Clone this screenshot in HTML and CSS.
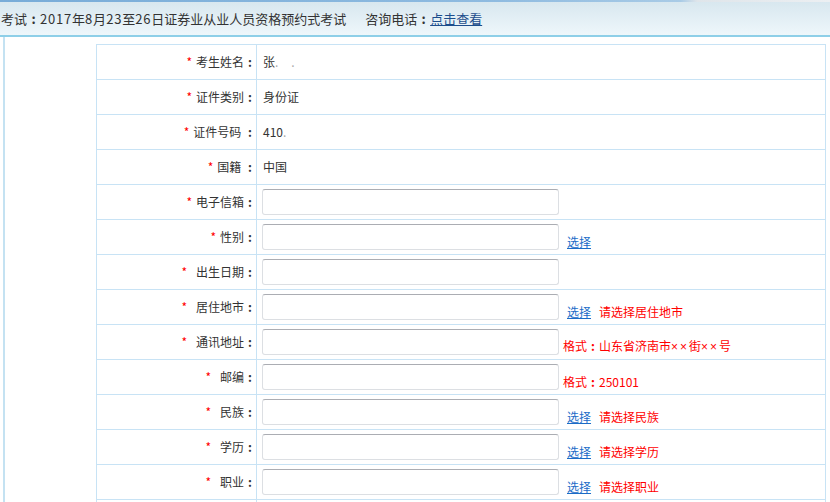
FILE: index.html
```html
<!DOCTYPE html>
<html lang="zh-CN">
<head>
<meta charset="utf-8">
<title>考生信息</title>
<link rel="stylesheet" href="styles.css">
</head>
<body>
<div class="topline"></div>
<div class="header">
  <span class="exam">考试<span class="c">:</span><span class="num">2017</span>年<span class="num">8</span>月<span class="num">23</span>至<span class="num">26</span>日证券业从业人员资格预约式考试</span>
  <span class="phone">咨询电话<span class="c">:</span><a href="#" class="hlink">点击查看</a></span>
</div>
<div class="main">
  <table class="form">
    <tr>
      <td class="label"><span class="req">*</span>考生姓名<span class="c">:</span></td>
      <td class="value"><span class="txt">张<span class="dim">.</span><span class="dim far">.</span></span></td>
    </tr>
    <tr>
      <td class="label"><span class="req">*</span>证件类别<span class="c">:</span></td>
      <td class="value"><span class="txt">身份证</span></td>
    </tr>
    <tr>
      <td class="label"><span class="req">*</span>证件号码 <span class="c">:</span></td>
      <td class="value"><span class="txt">410<span class="dim">.</span></span></td>
    </tr>
    <tr>
      <td class="label"><span class="req">*</span>国籍 <span class="c">:</span></td>
      <td class="value"><span class="txt">中国</span></td>
    </tr>
    <tr>
      <td class="label"><span class="req">*</span>电子信箱<span class="c">:</span></td>
      <td class="value"><div class="field"><input type="text" class="inp"></div></td>
    </tr>
    <tr>
      <td class="label"><span class="req">*</span>性别<span class="c">:</span></td>
      <td class="value"><div class="field"><input type="text" class="inp"><a href="#" class="pick">选择</a></div></td>
    </tr>
    <tr>
      <td class="label"><span class="req wide">*</span>出生日期<span class="c">:</span></td>
      <td class="value"><div class="field"><input type="text" class="inp"></div></td>
    </tr>
    <tr>
      <td class="label"><span class="req wide">*</span>居住地市<span class="c">:</span></td>
      <td class="value"><div class="field"><input type="text" class="inp"><a href="#" class="pick">选择</a><span class="tip">请选择居住地市</span></div></td>
    </tr>
    <tr>
      <td class="label"><span class="req wide">*</span>通讯地址<span class="c">:</span></td>
      <td class="value"><div class="field"><input type="text" class="inp"><span class="fmt">格式<span class="c">:</span>山东省济南市<span class="x">××</span>街<span class="x">××</span>号</span></div></td>
    </tr>
    <tr>
      <td class="label"><span class="req wide">*</span>邮编<span class="c">:</span></td>
      <td class="value"><div class="field"><input type="text" class="inp"><span class="fmt">格式<span class="c">:</span>250101</span></div></td>
    </tr>
    <tr>
      <td class="label"><span class="req wide">*</span>民族<span class="c">:</span></td>
      <td class="value"><div class="field"><input type="text" class="inp"><a href="#" class="pick">选择</a><span class="tip">请选择民族</span></div></td>
    </tr>
    <tr>
      <td class="label"><span class="req wide">*</span>学历<span class="c">:</span></td>
      <td class="value"><div class="field"><input type="text" class="inp"><a href="#" class="pick">选择</a><span class="tip">请选择学历</span></div></td>
    </tr>
    <tr>
      <td class="label"><span class="req wide">*</span>职业<span class="c">:</span></td>
      <td class="value"><div class="field"><input type="text" class="inp"><a href="#" class="pick">选择</a><span class="tip">请选择职业</span></div></td>
    </tr>
    <tr>
      <td class="label"></td>
      <td class="value"></td>
    </tr>
  </table>
</div>
</body>
</html>
```

FILE: styles.css
```css
html, body {
  margin: 0;
  padding: 0;
  background: #fff;
  overflow: hidden;
}
body {
  font-family: "Microsoft YaHei", "Noto Sans CJK SC", sans-serif;
  font-size: 12px;
  color: #333;
}
.c {
  display: inline-block;
  width: 1em;
  text-align: center;
  font-weight: bold;
}
.x {
  font-family: "Liberation Sans", Arial, sans-serif;
  letter-spacing: 2px;
}
.topline {
  height: 2px;
  background: linear-gradient(to right, #78acd8 0%, #8fbbe0 60%, #a9cbe6 82%, #dfe5ea 84%, #eceff2 100%);
}
.header {
  height: 33px;
  line-height: 33px;
  padding-left: 1px;
  background: linear-gradient(#d8e7ef, #eef7fb);
  border-bottom: 2px solid #8ecfe8;
  font-size: 13px;
  color: #333;
  white-space: nowrap;
}
.num {
  letter-spacing: 0.8px;
}
.phone {
  margin-left: 16px;
}
.hlink {
  color: #1c4d8c;
  text-decoration: underline;
}
.main {
  margin-left: 3px;
  border-left: 2px solid #c4e2f2;
  padding: 7px 0 0 91px;
  height: 600px;
}
.form {
  border-collapse: collapse;
  width: 730px;
}
.form td {
  border: 1px solid #c8e3f5;
  height: 34px;
  padding: 0;
  box-sizing: border-box;
}
.form tr {
  height: 35px;
}
.label {
  width: 160px;
  text-align: right;
  color: #333;
  line-height: 16px;
  white-space: pre;
}
.req {
  color: #f00;
  margin-right: 4px;
}
.req.wide {
  margin-right: 9px;
}
.value {
  padding-left: 5px !important;
  line-height: 16px;
}
.txt {
  padding-left: 1px;
  color: #333;
}
.dim {
  color: #aaa;
}
.dim.far {
  margin-left: 13px;
}
.field {
  display: flex;
  align-items: flex-end;
}
.inp {
  width: 297px;
  height: 26px;
  box-sizing: border-box;
  margin: 0;
  padding: 0 4px;
  border: 1px solid #dcdfe3;
  border-top-color: #abadb3;
  border-radius: 3px;
  background: #fff;
  outline: none;
}
.pick {
  margin-left: 8px;
  color: #1a6bc7;
  text-decoration: underline;
  line-height: 14px;
  padding-bottom: 1px;
}
.tip {
  margin-left: 8px;
  color: #f00;
  line-height: 14px;
  padding-bottom: 1px;
}
.fmt {
  margin-left: 4px;
  color: #f00;
  line-height: 14px;
  padding-bottom: 1px;
}
```
